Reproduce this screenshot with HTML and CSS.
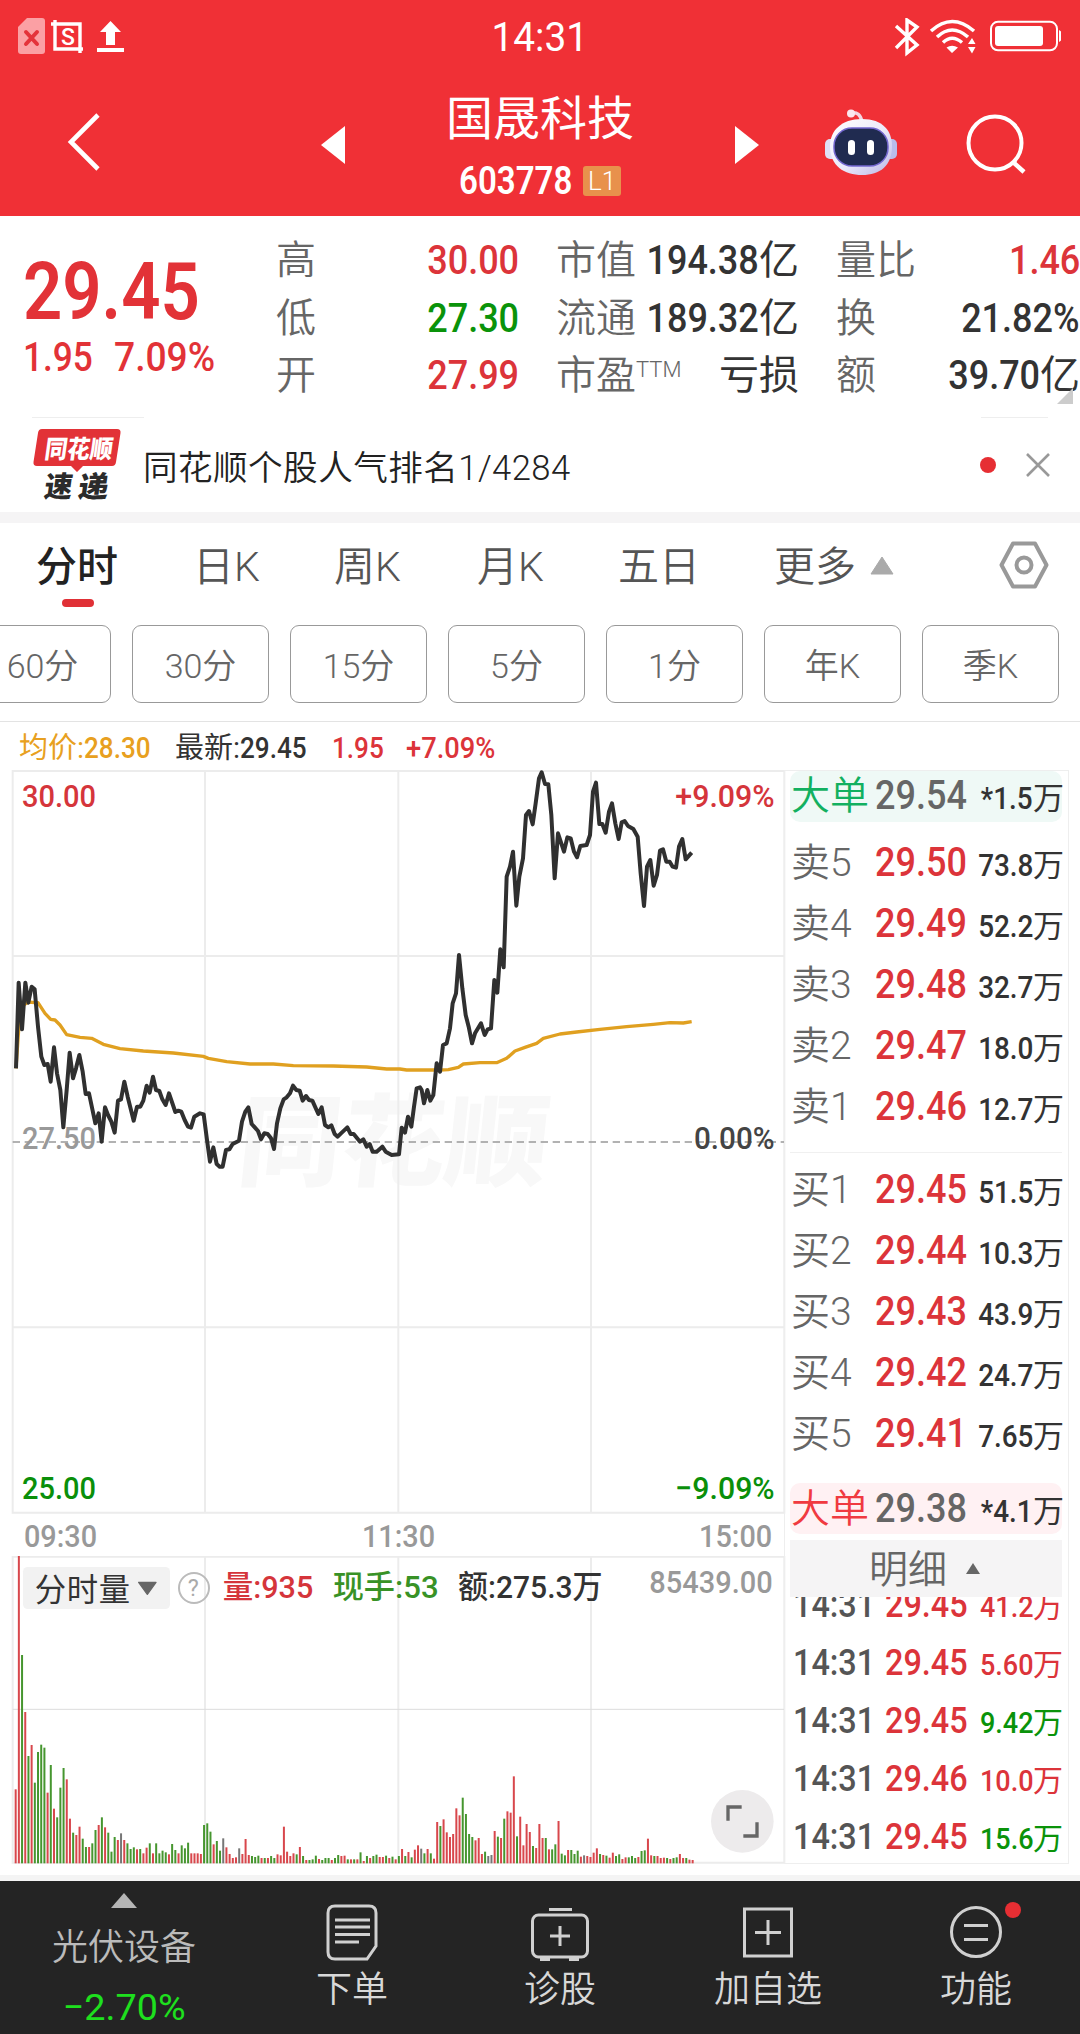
FILE: index.html
```html
<!doctype html>
<html lang="zh-CN">
<head>
<meta charset="utf-8">
<title>国晟科技 603778</title>
<link rel="stylesheet" href="styles.css">
<script src="chart.js" defer></script>
</head>
<body>
<div class="header">
	<div class="status">
		<svg class="status-l" width="110" height="40" viewBox="0 0 110 40">
			<path d="M9 0H24Q27 0 27 3V33Q27 36 24 36H3Q0 36 0 33V9Z" fill="#fba0a4"/>
			<path d="M8 14L19 26M19 14L8 26" stroke="#e4333b" stroke-width="4" stroke-linecap="round"/>
			<path d="M37 2V31H65M33 6H62V35" fill="none" stroke="#fff" stroke-width="3.4"/>
			<text x="43" y="26.500" font-size="23" font-weight="500" fill="#fff">S</text>
			<path d="M92.500 3L103 14H97V27H88V14H82ZM79 30H106V34H79Z" fill="#fff"/>
		</svg>
		<span class="time n">14:31</span>
		<svg class="status-r" width="168" height="40" viewBox="0 0 168 40">
			<path d="M3 8L24 27L14 35V2L24 9L3 30" fill="none" stroke="#fff" stroke-width="3.400"/>
			<g fill="none" stroke="#fff" stroke-width="3.500">
				<path d="M38 13Q59-6 81 13M44 19Q59 5 75 19M50 24.500Q59 16 69 24.500"/>
			</g>
			<path d="M53.500 29.500Q59 26 65 29.500L59 35ZM75 26L79 20L82.500 26ZM75 29L79 35.500L82.500 29Z" fill="#fff"/>
			<rect x="98" y="3.800" width="66" height="28.500" rx="7" fill="none" stroke="#fff" stroke-width="2"/>
			<rect x="102" y="8" width="48" height="20" rx="3" fill="#fff"/>
			<path d="M166 12Q169.500 14 169.500 18T166 24Z" fill="#fff"/>
		</svg>
	</div>
	<div class="bar">
		<div class="side">
			<svg class="back" width="34" height="60" viewBox="0 0 34 60"><path d="M31 3L4 30L31 57" fill="none" stroke="#fff" stroke-width="4.600"/></svg>
		</div>
		<svg width="24" height="38" viewBox="0 0 24 38"><path d="M0 19L24 0V38Z" fill="#fff"/></svg>
		<div class="name">
			<h1>国晟科技</h1>
			<p><span class="n">603778</span><i class="l1">L1</i></p>
		</div>
		<svg width="24" height="38" viewBox="0 0 24 38"><path d="M24 19L0 0V38Z" fill="#fff"/></svg>
		<div class="side tools">
			<svg width="72" height="70" viewBox="0 0 72 70">
				<defs><linearGradient id="shell" x1="0" y1="0" x2="1" y2="1"><stop offset="0" stop-color="#fff"/><stop offset=".55" stop-color="#ebe9fa"/><stop offset="1" stop-color="#b9b6e6"/></linearGradient></defs>
				<path d="M26 5Q35 3 37 14" fill="none" stroke="#f3d5e2" stroke-width="3.500"/>
				<circle cx="26" cy="5.500" r="4" fill="#fbe6ee"/>
				<rect x="0" y="31" width="14" height="20" rx="5" fill="#dfe0f6"/>
				<rect x="58" y="31" width="14" height="20" rx="5" fill="#b9bdeb"/>
				<path d="M37 11C58 11 67 23 67 38C67 58 55 67 37 67S5 58 5 38C5 23 16 11 37 11Z" fill="url(#shell)"/>
				<rect x="9" y="20" width="54" height="38" rx="18" fill="#202b50" stroke="#7367cf" stroke-width="1.500"/>
				<rect x="23" y="32" width="7" height="15" rx="3.500" fill="#fff"/><rect x="42" y="32" width="7" height="15" rx="3.500" fill="#fff"/>
			</svg>
			<svg class="find" width="60" height="62" viewBox="0 0 60 62"><circle cx="29" cy="30" r="26.500" fill="none" stroke="#fff" stroke-width="4"/><path d="M47 49L58 59" stroke="#fff" stroke-width="4.500"/></svg>
		</div>
	</div>
</div>

<div class="quote">
	<div class="now">
		<div class="price"><span class="n">29.45</span></div>
		<div class="diff"><span class="n">1.95</span><span class="n">7.09%</span></div>
	</div>
	<dl class="c1">
		<dt>高</dt><dd class="red"><span class="n">30.00</span></dd>
		<dt>低</dt><dd class="green"><span class="n">27.30</span></dd>
		<dt>开</dt><dd class="red"><span class="n">27.99</span></dd>
	</dl>
	<dl class="c2">
		<dt>市值</dt><dd><span class="n">194.38</span>亿</dd>
		<dt>流通</dt><dd><span class="n">189.32</span>亿</dd>
		<dt>市盈<sup>TTM</sup></dt><dd>亏损</dd>
	</dl>
	<dl class="c3">
		<dt>量比</dt><dd class="red"><span class="n">1.46</span></dd>
		<dt>换</dt><dd><span class="n">21.82%</span></dd>
		<dt>额</dt><dd><span class="n">39.70</span>亿</dd>
	</dl>
	<i class="corner"></i>
</div>

<div class="news">
	<svg width="90" height="76" viewBox="0 0 90 76">
		<path d="M9 2H84Q88 2 87.500 6L83 35Q82.500 39 79 39H50L44 45L38 39H4Q0 39 .5 35L5 6Q5.500 2 9 2Z" fill="#e23237"/>
		<g font-weight="900" transform="skewX(-8)">
			<text x="15" y="31" font-size="25" textLength="68" lengthAdjust="spacingAndGlyphs" fill="#fff">同花顺</text>
			<text x="20" y="70" font-size="29" textLength="28" lengthAdjust="spacingAndGlyphs" fill="#2b2b2b">速</text>
			<text x="54" y="70" font-size="29" textLength="30" lengthAdjust="spacingAndGlyphs" fill="#2b2b2b">递</text>
		</g>
	</svg>
	<p>同花顺个股人气排名1/4284</p>
	<i class="dot"></i>
	<svg width="24" height="24" viewBox="0 0 24 24"><path d="M1 1L23 23M23 1L1 23" stroke="#999" stroke-width="2.600"/></svg>
</div>

<div class="tabs">
	<a class="on">分时</a><a>日K</a><a>周K</a><a>月K</a><a>五日</a><a>更多<svg width="24" height="19" viewBox="0 0 24 19"><path d="M12 1L23 18H1Z" fill="#aaa" stroke="#aaa" stroke-linejoin="round"/></svg></a>
	<svg class="set" width="50" height="48" viewBox="0 0 50 48"><path d="M14 2.500H36L47.500 24L36 45.500H14L2.500 24Z" fill="none" stroke="#999" stroke-width="4" stroke-linejoin="round"/><circle cx="25" cy="24" r="7.500" fill="none" stroke="#999" stroke-width="4"/></svg>
</div>
<div class="periods"><a>60分</a><a>30分</a><a>15分</a><a>5分</a><a>1分</a><a>年K</a><a>季K</a></div>

<div class="legend">
	<span class="avg">均价:<b class="n">28.30</b></span>
	<span class="last">最新:<b class="n">29.45</b></span>
	<span class="chg red"><b class="n">1.95</b></span>
	<span class="red"><b class="n">+7.09%</b></span>
</div>

<div class="main">
	<div class="charts">
		<svg id="trend" width="786" height="744" viewBox="0 30 2358 2232">
			<g transform="skewX(-6)"><text x="838" y="1255" font-size="300" font-weight="900" fill="#f8f8f8" textLength="930" lengthAdjust="spacingAndGlyphs">同花顺</text></g>
			<path class="grid" d="M38 33H2353V2258H38ZM615 33V2258M1195 33V2258M1773 33V2258M38 588H2353M38 1702H2353"/>
			<path d="M38 1146H2353" stroke="#999" stroke-width="5" stroke-dasharray="22 14"/>
			<g class="axis">
				<text x="66" y="141" fill="#d5353b" textLength="222" lengthAdjust="spacingAndGlyphs">30.00</text>
				<text x="2026" y="141" fill="#d5353b" textLength="298" lengthAdjust="spacingAndGlyphs">+9.09%</text>
				<text x="66" y="1167" fill="#999" textLength="222" lengthAdjust="spacingAndGlyphs">27.50</text>
				<text x="2082" y="1167" fill="#444" textLength="242" lengthAdjust="spacingAndGlyphs">0.00%</text>
				<text x="66" y="2217" fill="#0a8f0a" textLength="222" lengthAdjust="spacingAndGlyphs">25.00</text>
				<text x="2026" y="2217" fill="#0a8f0a" textLength="298" lengthAdjust="spacingAndGlyphs">−9.09%</text>
			</g>
			<polyline id="avg"/>
			<polyline id="line"/>
		</svg>
		<div class="times"><span class="n">09:30</span><span class="n">11:30</span><span class="n">15:00</span></div>
		<div class="volume">
			<svg id="vol" width="786" height="309" viewBox="0 288 2358 927">
				<path class="grid" d="M38 290H2353V1208H38ZM615 290V1208M1195 290V1208M1773 290V1208"/>
				<path d="M38 748H2353" stroke="#ddd" stroke-width="3"/>
				<g id="bars"></g>
				<rect x="69" y="321" width="441" height="126" rx="14" fill="#f2f2f2"/>
				<path d="M416 367H468L442 403Z" fill="#666" stroke="#666" stroke-width="4" stroke-linejoin="round"/>
				<circle cx="582" cy="384" r="45" fill="none" stroke="#bbb" stroke-width="6"/>
				<g class="vt">
					<text x="104" y="423" textLength="286" fill="#333" font-weight="400">分时量</text>
					<text x="563" y="409" font-size="70" fill="#aaa" font-weight="400">?</text>
					<text x="668" y="414" textLength="272" lengthAdjust="spacingAndGlyphs" fill="#d5353b">量:935</text>
					<text x="998" y="414" textLength="318" lengthAdjust="spacingAndGlyphs" fill="#389226">现手:53</text>
					<text x="1374" y="414" textLength="434" lengthAdjust="spacingAndGlyphs" fill="#333">额:275.3万</text>
					<text x="1948" y="400" textLength="370" lengthAdjust="spacingAndGlyphs" fill="#999">85439.00</text>
				</g>
				<circle cx="2227" cy="1084" r="94" fill="#edebec"/>
				<path d="M2184 1082V1041H2225M2230 1128H2271V1087" fill="none" stroke="#666" stroke-width="10"/>
			</svg>
		</div>
	</div>

	<div class="book">
		<div class="big sell"><span>大单</span><b><i class="n">29.54</i></b><em><i class="n">*1.5</i>万</em></div>
		<ul class="asks">
			<li><span>卖5</span><b><i class="n">29.50</i></b><em><i class="n">73.8</i>万</em></li>
			<li><span>卖4</span><b><i class="n">29.49</i></b><em><i class="n">52.2</i>万</em></li>
			<li><span>卖3</span><b><i class="n">29.48</i></b><em><i class="n">32.7</i>万</em></li>
			<li><span>卖2</span><b><i class="n">29.47</i></b><em><i class="n">18.0</i>万</em></li>
			<li><span>卖1</span><b><i class="n">29.46</i></b><em><i class="n">12.7</i>万</em></li>
		</ul>
		<ul class="bids">
			<li><span>买1</span><b><i class="n">29.45</i></b><em><i class="n">51.5</i>万</em></li>
			<li><span>买2</span><b><i class="n">29.44</i></b><em><i class="n">10.3</i>万</em></li>
			<li><span>买3</span><b><i class="n">29.43</i></b><em><i class="n">43.9</i>万</em></li>
			<li><span>买4</span><b><i class="n">29.42</i></b><em><i class="n">24.7</i>万</em></li>
			<li><span>买5</span><b><i class="n">29.41</i></b><em><i class="n">7.65</i>万</em></li>
		</ul>
		<div class="big buy"><span>大单</span><b><i class="n">29.38</i></b><em><i class="n">*4.1</i>万</em></div>
		<div class="more">明细<svg width="14" height="11" viewBox="0 0 14 11"><path d="M7 0L14 11H0Z" fill="#666"/></svg></div>
		<div class="clip">
			<ul class="deals">
				<li><span class="n">14:31</span><b><i class="n">29.45</i></b><em class="red"><i class="n">41.2</i>万</em></li>
				<li><span class="n">14:31</span><b><i class="n">29.45</i></b><em class="red"><i class="n">5.60</i>万</em></li>
				<li><span class="n">14:31</span><b><i class="n">29.45</i></b><em class="green"><i class="n">9.42</i>万</em></li>
				<li><span class="n">14:31</span><b><i class="n">29.46</i></b><em class="red"><i class="n">10.0</i>万</em></li>
				<li><span class="n">14:31</span><b><i class="n">29.45</i></b><em class="green"><i class="n">15.6</i>万</em></li>
			</ul>
		</div>
	</div>
</div>

<div class="nav">
	<div class="sector">
		<svg width="28" height="15" viewBox="0 0 28 15"><path d="M14 0L27 15H1Z" fill="#b5b5b5"/></svg>
		<p>光伏设备</p>
		<p class="down"><span class="n">−2.70%</span></p>
	</div>
	<a><svg width="60" height="60" viewBox="0 0 60 60"><path d="M13 5H47Q54 5 54 12V45L45 58H13Q6 58 6 51V12Q6 5 13 5Z"/><path d="M13 19H48M13 26H48M13 33.500H48M13 41H37"/></svg>下单</a>
	<a><svg width="60" height="60" viewBox="0 0 60 60"><rect x="2.500" y="14" width="55" height="42" rx="6"/><path d="M19 8.500H42M30 25V45M20 35H40"/><path d="M10 58.500H20M39 58.500H49"/></svg>诊股</a>
	<a><svg width="60" height="60" viewBox="0 0 60 60"><path d="M6.500 8H53.500V55H6.500ZM30 19V44M17 31.500H43"/></svg>加自选</a>
	<a><svg width="60" height="60" viewBox="0 0 60 60"><circle cx="30" cy="31" r="24.500"/><path d="M18 24.500H42M18 38.500H42"/></svg><i></i>功能</a>
</div>
</body>
</html>
```
FILE: styles.css
```css
*{padding:0; margin:0; box-sizing:border-box;}
body{width:1080px; height:2034px; overflow:hidden; background:#fff; font-family:Roboto,"Noto Sans CJK SC",sans-serif; color:#333;}
li{list-style:none;}
i,em{font-style:normal;}
svg{display:block; flex:none;}
.n{display:inline-block; transform:scaleX(.9); transform-origin:0 50%; font-weight:500;}
.red{color:#dc343a;}
.green{color:#0a930a;}

.header{height:216px; background:#f03036; color:#fff;}
.status{height:76px; display:flex; padding:18px 19px 0 18px; justify-content:space-between;}
.status .time{font-size:40px; line-height:40px; font-weight:400; transform:scaleX(.97); transform-origin:50% 50%; margin-left:58px;}
.bar{display:flex; height:140px;}
.bar > svg{margin-top:50px;}
.side{width:321px; padding-left:67px; padding-top:36px;}
.name{width:390px; text-align:center;}
.name h1{font-size:47px; line-height:56px; font-weight:400; margin-top:15px;}
.name p{display:flex; justify-content:center; align-items:center; height:36px; margin-top:16px; font-size:38px;}
.name .n{transform:scaleX(.87); transform-origin:0 50%; font-weight:600;}
.l1{width:38px; height:30px; line-height:30px; background:#e8914c; border-radius:3px; font-size:26px; font-weight:300; margin-left:-6px;}
.tools{display:flex; padding:32px 0 0 66px;}
.find{margin:5px 0 0 69px;}

.quote{height:201px; display:flex; padding-top:16px; position:relative; font-size:40px;}
.now{width:276px; padding:22px 0 0 23px; color:#e23237;}
.price{font-size:80px; line-height:76px; height:76px;}
.price .n{transform:scaleX(.86); font-weight:600;}
.diff{display:flex; height:50px; line-height:50px; margin-top:3px;}
.diff .n{width:91px; transform:scaleX(.88);}
.diff .n + .n{transform:scaleX(.93);}
.quote dl{display:grid; grid-template-columns:auto auto; grid-auto-rows:57.500px; line-height:58px; justify-content:space-between; white-space:nowrap;}
.quote dt{color:#666; font-weight:350;}
.quote dd{text-align:right; font-weight:400; margin-left:-60px;}
.quote dd .n{transform:scaleX(.9); transform-origin:100% 50%;}
.quote sup{font-size:22px; line-height:20px; vertical-align:12px;}
.c1{width:243px;}
.c2{width:243px; margin-left:37px;}
.c3{width:244px; margin-left:37px;}
.corner{position:absolute; right:7px; bottom:13px; border:8px solid transparent; border-right-color:#ccc; border-bottom-color:#ccc;}
/* stubs of the notice card border */
.news:before,.news:after{content:""; position:absolute; top:0; height:1px; background:#eee;}
.news:before{left:32px; width:112px;}
.news:after{left:981px; width:67px;}

.news{height:106px; position:relative; display:flex; align-items:center; padding:0 30px 0 33px; border-bottom:11px solid #f5f4f5;}
.news p{flex:1; font-size:34.600px; font-weight:350; letter-spacing:.45px; color:#222; padding-left:20px; white-space:nowrap;}
.dot{width:16px; height:16px; border-radius:50%; background:#e62e33; margin-right:30px;}

.tabs{height:102px; display:flex; padding-top:15px; position:relative; font-size:41px; font-weight:350; color:#555; line-height:58px;}
.tabs a{position:relative; display:flex; width:144px;}
.tabs a.on{color:#222; font-weight:500; width:157px; margin-left:36px;}
.tabs a.on:after{content:""; position:absolute; left:26px; top:61px; width:32px; height:8px; border-radius:4px; background:#e03036;}
.tabs a:nth-child(2){width:141px;}
.tabs a:nth-child(3){width:143px;}
.tabs a:nth-child(4){width:141px;}
.tabs a:nth-child(5){width:156px;}
.tabs a svg{margin:18px 0 0 14px;}
.set{margin:3px 0 0 81px;}
.periods{display:flex; gap:21px; margin-left:-26px; height:96px;}
.periods a{flex:none; width:137px; height:78px; line-height:80px; border:1.500px solid #999; border-radius:9px; text-align:center; color:#666; font-size:34px; font-weight:350;}

.legend{height:49px; border-top:1px solid #e3e3e3; display:flex; padding:3px 0 0 19px; font-size:29px; line-height:46px; white-space:nowrap;}
.legend span{width:156px;}
.legend .chg{width:74px; padding-left:1px;}
.legend .chg + span{padding-left:1px;}
.legend .chg + span .n{transform:scaleX(.94);}
.avg{color:#e8a020;}

.main{display:flex; height:1105px;}
.charts{width:784px;}
.grid{fill:none; stroke:#ececec; stroke-width:6;}
#trend,#vol{margin-right:-2px;}
#line{fill:none; stroke:#303030; stroke-width:12; stroke-linejoin:round;}
#avg{fill:none; stroke:#e0a020; stroke-width:10; stroke-linejoin:round;}
.axis{font-size:94px; font-weight:500;}
.times{height:42px; display:flex; justify-content:space-between; padding:0 12px 0 24px; font-size:32px; line-height:44px; color:#999;}
.times .n:nth-child(2){margin-left:9px;}
.times .n:nth-child(3){transform-origin:100% 50%;}
.vt{font-size:94px; font-weight:500;}

.book{width:285px; height:1094px; border:1px solid #eee; padding:0 6px 0 5px; display:flex; flex-direction:column;}
.big,.asks li,.bids li{display:flex; line-height:61px; height:61px; padding-left:1px; white-space:nowrap; align-items:baseline;}
.big{height:51px; line-height:50px; border-radius:10px; flex:none;}
.sell{background:#eff9f6; color:#12b060;}
.buy{background:#fff1f3; color:#f03a40; margin-top:19px; line-height:52px;}
.book span{width:84px; font-size:39px; font-weight:350; color:#666;}
.book .big span{color:inherit;}
.book b{font-size:40px; font-weight:500; width:90px; color:#dc343a;}
.book b .n{transform:scaleX(.9);}
.book .big b{color:#666;}
.book em{flex:1; text-align:right; font-size:31px; font-weight:400; color:#333; margin:0 -2px 0 -10px;}
.book em .n{transform-origin:100% 50%;}
.asks{padding-top:10px; height:331px; border-bottom:1px solid #f0f0f0;}
.bids{padding-top:6px; height:311px;}
.more{flex:none; height:57px; margin:6px 0 0; background:#f5f4f5; color:#666; font-weight:350; font-size:39px; line-height:61px; display:flex; padding-left:79px;}
.more svg{margin:23px 0 0 19px;}
.clip{flex:1; overflow:hidden; margin-right:-2px;}
.deals{margin:-21px 2px 0 0;}
.deals li{display:flex; align-items:baseline; height:58px; line-height:58px; padding-left:3px; white-space:nowrap;}
.deals span.n{width:92px; font-size:36px; font-weight:500; color:#555; transform:scaleX(.9);}
.deals b{font-size:36px; width:82px;}
.deals em{font-size:30px; margin-right:-1px;}
.deals em.red{color:#dc343a;}
.deals em.green{color:#0a930a;}

.nav{height:159px; border-top:6px solid #f4f4f4; background:#242424; display:flex; color:#d8d8d8; font-size:36px; font-weight:350;}
.nav a{width:208px; text-align:center; line-height:50px; padding-top:20px; position:relative;}
.nav a svg{margin:0 auto 4px; fill:none; stroke:#d0d0d0; stroke-width:3;}
.nav a i{position:absolute; left:133px; top:21px; width:16px; height:16px; border-radius:50%; background:#e62e33;}
.sector{width:248px; text-align:center; color:#bbb; line-height:50px;}
.sector svg{margin:12px auto 15px;}
.down{color:#1ee01e; margin-top:10px;}
.down .n{transform:scaleX(1.02); transform-origin:50% 50%; font-weight:400; font-size:37px;}
```
FILE: chart.js
```js
var avg='48,925 58,780 70,735 85,726 104,728 114,728 135,760 152,778 165,780 180,795 200,824 240,832 275,835 310,853 360,866 430,873 520,879 610,889 625,895 680,905 750,912 820,912 880,917 1000,918 1100,921 1160,927 1200,927 1220,930 1320,930 1345,929 1375,922 1390,912 1440,908 1490,908 1520,895 1545,873 1575,862 1610,850 1630,835 1680,822 1730,816 1800,808 1880,800 1960,793 2010,788 2050,789 2075,785';
var line='48,925 56,668 66,808 76,668 85,728 95,680 104,688 114,800 124,890 133,915 143,912 152,965 162,862 171,940 181,990 190,1102 200,990 209,878 219,955 228,925 238,885 248,935 257,1002 267,1000 286,1090 296,1060 305,1145 315,1042 324,1065 334,1085 344,1118 354,1022 363,1018 373,965 383,1010 401,1082 411,1040 421,1040 430,1022 440,977 449,998 459,950 468,990 478,993 487,1018 497,1035 507,1000 526,1056 535,1052 544,1055 554,1080 564,1100 573,1103 583,1070 600,1060 611,1063 621,1140 630,1205 640,1162 650,1212 659,1220 668,1220 678,1170 688,1168 698,1152 717,1142 726,1085 736,1055 745,1042 755,1092 765,1103 774,1113 783,1138 793,1120 803,1122 813,1135 822,1167 831,1090 841,1045 851,1018 860,1012 870,1000 879,977 889,990 899,992 908,1022 918,1008 927,1020 937,1022 955,1062 965,1042 975,1095 985,1102 994,1096 1004,1122 1013,1130 1023,1120 1042,1102 1052,1122 1061,1122 1080,1145 1090,1138 1100,1160 1109,1152 1118,1175 1130,1175 1147,1160 1157,1175 1175,1185 1197,1183 1205,1103 1215,1118 1224,1070 1234,1100 1242,1040 1250,985 1260,982 1265,990 1272,1030 1282,990 1291,1022 1300,1005 1310,910 1320,935 1329,855 1340,850 1350,805 1358,730 1368,700 1377,585 1387,685 1397,765 1406,800 1416,850 1425,820 1443,790 1454,825 1463,808 1473,805 1483,660 1492,698 1501,568 1511,622 1520,350 1530,320 1539,275 1549,437 1558,350 1569,295 1578,165 1587,153 1598,193 1607,130 1617,55 1625,37 1635,72 1645,73 1654,165 1664,355 1674,220 1692,275 1702,232 1712,235 1722,275 1731,292 1741,258 1760,255 1770,225 1779,95 1788,68 1798,192 1807,192 1817,218 1827,155 1836,130 1846,190 1856,237 1865,187 1874,183 1884,198 1900,207 1913,230 1922,340 1932,438 1941,320 1951,300 1961,377 1971,345 1980,272 1989,268 1999,305 2009,305 2018,320 2028,323 2037,260 2047,237 2057,298 2075,278';
// top of every minute bar; r up, g down, k flat
var vol='r988 r288 g585 r756 g888 r855 g968 g876 g854 g863 r998 g915 r1046 g1072 g983 g924 r958 r1076 g1118 r1125 r1100 g1136 g1161 r1161 g1150 g1110 r1095 g1072 r1102 g1118 g1175 g1131 r1140 k1120 r1140 g1150 g1167 g1162 r1168 g1167 r1180 r1163 g1150 r1180 g1150 g1180 g1172 g1177 r1183 g1152 g1170 r1180 g1156 g1165 g1148 r1180 r1180 r1180 r1182 g1095 g1090 g1115 r1153 g1143 g1172 k1135 r1162 r1182 r1194 r1192 k1165 r1182 r1137 r1185 g1188 g1191 g1187 r1194 g1194 r1194 g1188 g1194 r1183 r1186 r1100 r1175 r1188 r1180 g1183 r1161 g1188 r1200 g1200 g1198 g1187 r1197 g1200 g1194 g1194 r1200 g1194 g1185 r1188 r1187 g1198 r1198 g1198 r1198 g1177 r1203 g1188 r1194 g1188 g1184 r1191 r1191 g1187 r1194 g1190 r1198 g1188 r1167 g1188 r1176 g1192 r1169 r1156 k1166 g1180 r1167 g1180 r1196 r1086 g1098 r1078 r1117 r1131 r1122 r1045 r1066 g1013 g1062 g1122 g1131 r1141 r1134 r1182 g1175 k1188 k1185 r1113 g1130 r1134 g1076 r1054 r1058 r949 g1129 r1070 r1156 r1092 r1116 g1158 r1164 r1092 r1134 g1134 r1168 g1168 g1153 r1083 g1181 g1186 r1170 g1170 g1182 g1172 r1190 k1186 r1188 r1191 r1178 r1165 g1182 r1185 g1187 r1193 r1178 g1188 g1183 r1197 r1192 g1192 g1188 g1194 r1191 g1173 g1171 r1136 r1186 g1188 r1188 r1194 r1193 g1194 r1197 g1194 g1192 r1182 r1194 g1194 r1199 r1200';
var color={r:'#d8474c',g:'#46962f',k:'#777'};

document.getElementById('avg').setAttribute('points',avg);
document.getElementById('line').setAttribute('points',line);

var bars=document.getElementById('bars');
var aVol=vol.split(' ');
for(var i=0; i<aVol.length; i++){
	var top1=+aVol[i].slice(1);
	var r=document.createElementNS('http://www.w3.org/2000/svg','rect');
	r.setAttribute('x',44+i*9.58);
	r.setAttribute('y',top1);
	r.setAttribute('width',6);
	r.setAttribute('height',1210-top1);
	r.setAttribute('fill',color[aVol[i].charAt(0)]);
	bars.appendChild(r);
}
```
